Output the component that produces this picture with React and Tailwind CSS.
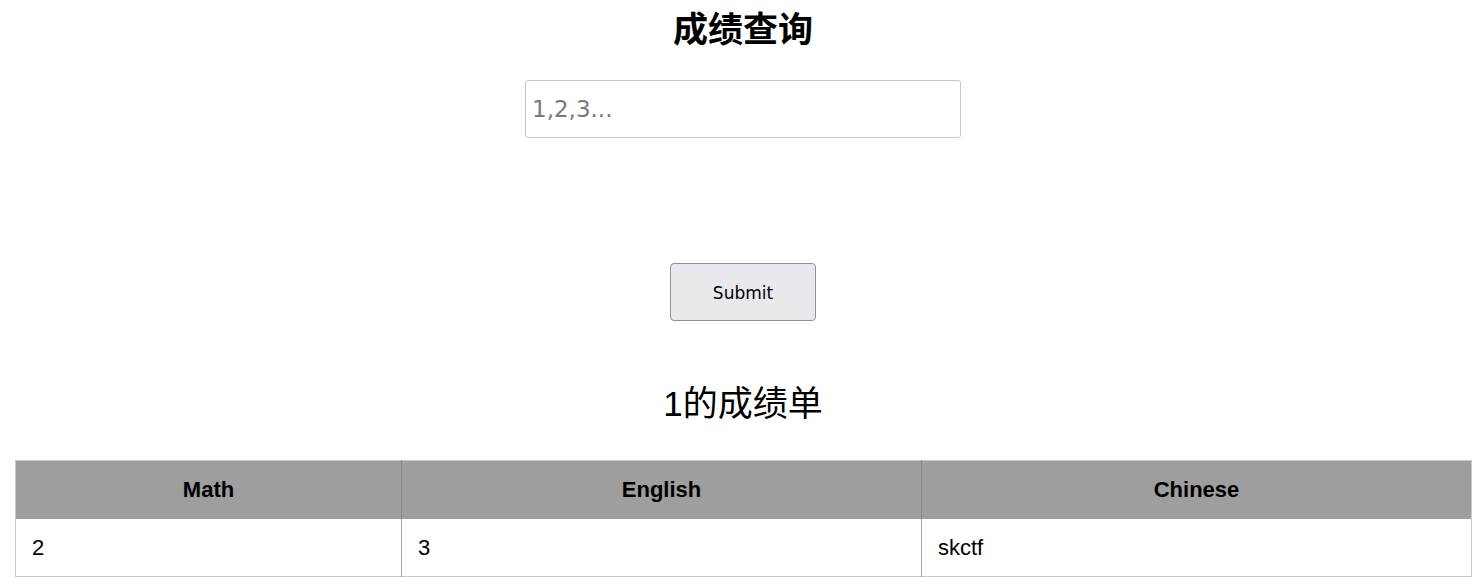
import React from 'react';

const scores = [{ math: '2', english: '3', chinese: 'skctf' }];

const App = () => {
  return (
    <main className="min-h-screen bg-white font-['Liberation_Sans',sans-serif] text-black">
      <h1 className="pl-[6px] pt-[9px] text-center font-['Liberation_Sans','Noto_Sans_CJK_SC',sans-serif] text-[35px] font-bold leading-[42px]">
        成绩查询
      </h1>

      <form className="flex flex-col items-center pl-[6px]" onSubmit={(event) => event.preventDefault()}>
        <input
          placeholder="1,2,3..."
          className="mt-[29px] h-[58px] w-[436px] rounded-[3px] border border-[#c6c6cc] px-[6px] font-['DejaVu_Sans',sans-serif] text-[23px] text-black placeholder:text-[#7a7a7a] focus:outline-none"
        />
        <button
          type="submit"
          className="mt-[125px] h-[58px] w-[146px] rounded-[4px] border border-[#8f8f9d] bg-[#e9e9ed] pt-[3px] font-['DejaVu_Sans',sans-serif] text-[17px] text-black"
        >
          Submit
        </button>
      </form>

      <h2 className="mt-[62px] pl-[6px] text-center font-['Liberation_Sans','Noto_Sans_CJK_SC',sans-serif] text-[35px] leading-[42px]">
        1的成绩单
      </h2>

      <div className="mt-[35px] px-[15px]">
        <table className="w-[1457px] table-fixed border-collapse border border-[#c8c8c8] text-[22px]">
          <colgroup>
            <col className="w-[386px]" />
            <col className="w-[520px]" />
            <col />
          </colgroup>
          <thead>
            <tr className="h-[58px] bg-[#9e9e9e]">
              <th className="border-r border-[#8a8a8a] font-bold">Math</th>
              <th className="border-r border-[#8a8a8a] font-bold">English</th>
              <th className="font-bold">Chinese</th>
            </tr>
          </thead>
          <tbody>
            {scores.map((row, index) => (
              <tr key={index} className="h-[58px]">
                <td className="border-r border-[#a8a8a8] pl-[16px]">{row.math}</td>
                <td className="border-r border-[#a8a8a8] pl-[16px]">{row.english}</td>
                <td className="pl-[16px]">{row.chinese}</td>
              </tr>
            ))}
          </tbody>
        </table>
      </div>
    </main>
  );
};

export default App;
